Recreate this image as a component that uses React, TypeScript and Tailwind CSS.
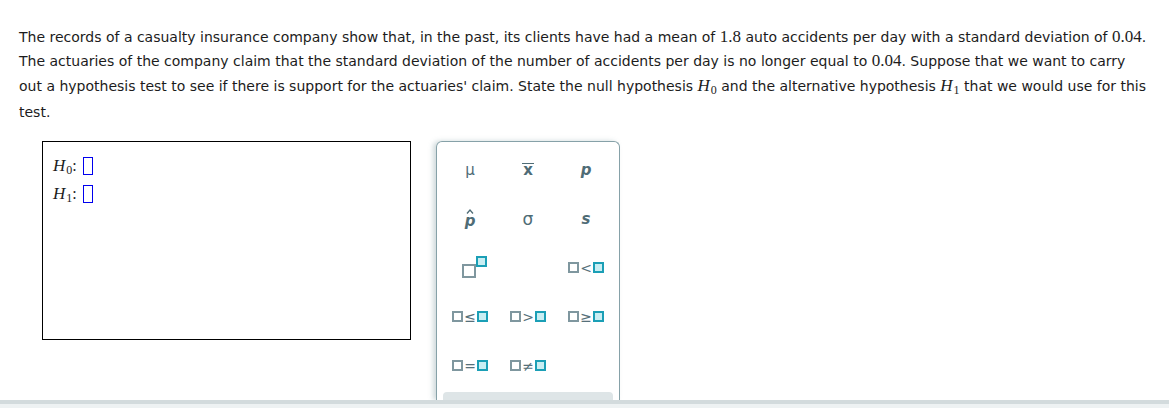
import React from "react";

const num = "font-['Liberation_Serif',serif] text-[17px]";

function MathH({ sub }: { sub: string }) {
  return (
    <span className="font-['Liberation_Serif',serif] text-[17px] italic">
      H<sub className="not-italic text-[12px] relative top-[3px] ml-[1px]">{sub}</sub>
    </span>
  );
}

function Box({ filled }: { filled?: boolean }) {
  return (
    <span
      className={
        filled
          ? "inline-block w-[11px] h-[11px] border-2 border-[#1b9fb6] bg-[#c9eef3]"
          : "inline-block w-[11px] h-[11px] border-2 border-[#7f979f] bg-white"
      }
    />
  );
}

function Rel({ sym }: { sym: string }) {
  return (
    <span className="flex items-center gap-[1px]">
      <Box />
      <span className="text-[14px] leading-none text-[#56707a] font-['DejaVu_Sans',sans-serif]">
        {sym}
      </span>
      <Box filled />
    </span>
  );
}

function Cell({ children }: { children?: React.ReactNode }) {
  return (
    <div className="h-[49px] flex items-center justify-center text-[#4f6c76]">
      {children}
    </div>
  );
}

export default function App() {
  return (
    <div className="w-[1169px] h-[408px] bg-white flex flex-col font-['DejaVu_Sans',sans-serif] text-[14px] text-[#1c1c1c] overflow-hidden">
      <div className="px-[19px] pt-[25px] leading-[24px] flex-1 min-h-0 flex flex-col">
        <div>
          The records of a casualty insurance company show that, in the past, its clients have had a mean of{" "}
          <span className={num}>1.8</span> auto accidents per day with a standard deviation of{" "}
          <span className={num}>0.04</span>.
        </div>
        <div>
          The actuaries of the company claim that the standard deviation of the number of accidents per day is no longer equal to{" "}
          <span className={num}>0.04</span>. Suppose that we want to carry
        </div>
        <div className="leading-[25px]">
          out a hypothesis test to see if there is support for the actuaries' claim. State the null hypothesis <MathH sub="0" /> and
          the alternative hypothesis <MathH sub="1" /> that we would use for this
        </div>
        <div className="leading-[26px]">test.</div>

        <div className="flex flex-1 min-h-0 gap-[25px] mt-[16px] ml-[23px]">
          <div className="w-[369px] h-[199px] border border-black px-[10px] pt-[12px] flex flex-col gap-[4px]">
            {["0", "1"].map((s) => (
              <div key={s} className="flex items-center h-[24px]">
                <MathH sub={s} />
                <span className="font-['Liberation_Serif',serif] text-[16px]">:</span>
                <span className="inline-block w-[10px] h-[18px] border border-[#0000ee] ml-[6px]" />
              </div>
            ))}
          </div>

          <div className="w-[184px] border border-b-0 border-[#86a1a8] rounded-t-[6px] shadow-[-3px_0_5px_rgba(120,150,155,0.35)] pt-[3px] px-[2px] flex flex-col overflow-hidden">
            <div className="grid grid-cols-3 px-[2px]">
              <Cell>
                <span className="text-[15px]">μ</span>
              </Cell>
              <Cell>
                <span className="text-[15px] font-bold border-t-[1.5px] border-[#4f6c76] leading-[13px] px-[1px]">x</span>
              </Cell>
              <Cell>
                <span className="text-[15px] italic font-bold">p</span>
              </Cell>
              <Cell>
                <span className="flex flex-col items-center">
                  <svg width="8" height="5" viewBox="0 0 8 5" className="mb-[1px]">
                    <path d="M1 4.5 L4 1 L7 4.5" fill="none" stroke="#4f6c76" strokeWidth="1.3" />
                  </svg>
                  <span className="text-[15px] italic font-bold leading-[13px]">p</span>
                </span>
              </Cell>
              <Cell>
                <span className="text-[17px]">σ</span>
              </Cell>
              <Cell>
                <span className="text-[15px] italic font-bold">s</span>
              </Cell>
              <Cell>
                <span className="relative inline-block w-[17px] h-[15px] mt-[6px]">
                  <span className="absolute bottom-0 left-0 w-[14px] h-[14px] border-2 border-[#7f979f] bg-white" />
                  <span className="absolute -top-[7px] left-[14px] w-[11px] h-[11px] border-2 border-[#1b9fb6] bg-[#c9eef3]" />
                </span>
              </Cell>
              <Cell />
              <Cell>
                <Rel sym="<" />
              </Cell>
              <Cell>
                <Rel sym="≤" />
              </Cell>
              <Cell>
                <Rel sym=">" />
              </Cell>
              <Cell>
                <Rel sym="≥" />
              </Cell>
              <Cell>
                <Rel sym="=" />
              </Cell>
              <Cell>
                <Rel sym="≠" />
              </Cell>
              <Cell />
            </div>
            <div className="mt-auto shrink-0 mx-[4px] h-[8px] rounded-t-[4px] bg-[#dee5e7]" />
          </div>
        </div>
      </div>
      <div className="h-[4px] bg-[#d3dbdd] shrink-0" />
      <div className="h-[4px] bg-[#eef2f3] shrink-0" />
    </div>
  );
}
